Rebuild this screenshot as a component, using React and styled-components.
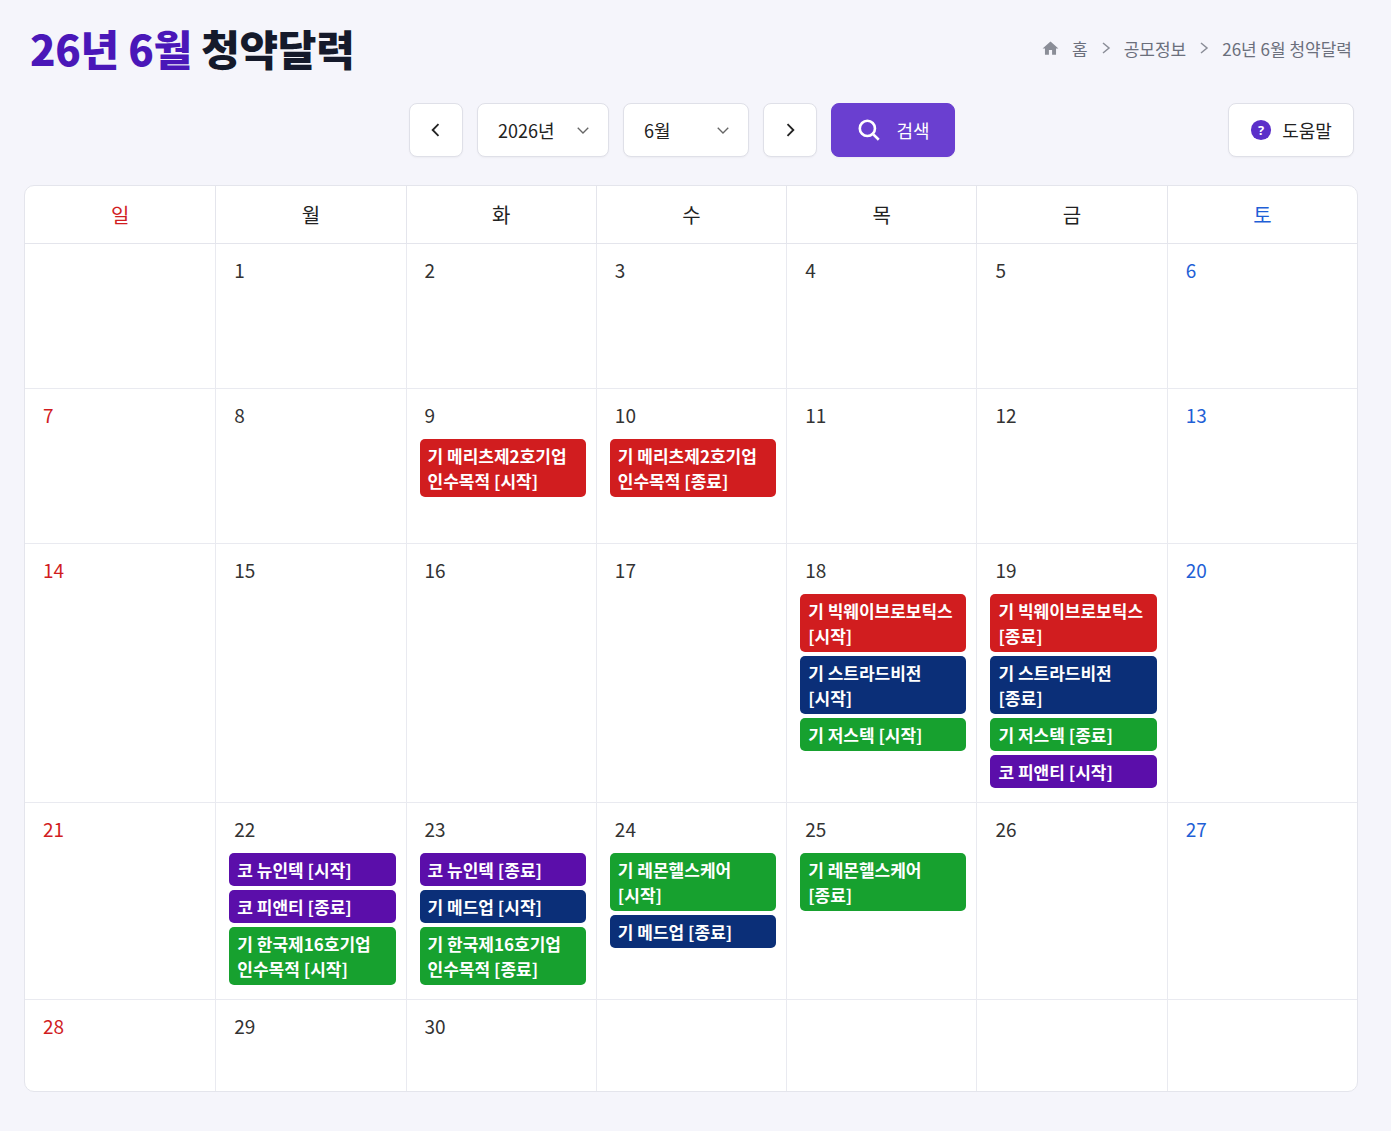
import React from "react";
import styled, { createGlobalStyle } from "styled-components";

const G = createGlobalStyle`
  body{margin:0;background:#f5f5fb;font-family:"Noto Sans CJK KR","Noto Sans",sans-serif;}
`;
const Page = styled.div`padding:20px 33px 30px 24px;`;
const Top = styled.div`display:flex;justify-content:space-between;align-items:center;padding-left:6px;`;
const Title = styled.h1`margin:0;font-size:42px;font-weight:800;color:#151a2b;letter-spacing:-0.3px;line-height:56px;span{color:#4a17b8;}`;
const Crumbs = styled.div`display:flex;align-items:center;gap:12px;color:#6b6f7c;font-size:17px;padding-right:6px;`;
const Bar = styled.div`display:flex;align-items:center;margin-top:27px;height:54px;position:relative;`;
const Center = styled.div`flex:1;display:flex;justify-content:center;gap:14px;padding-right:18px;`;
const Btn = styled.button`height:54px;border:1px solid #dfe0e8;background:#fff;border-radius:8px;display:flex;align-items:center;justify-content:${p=>p.$sp?"space-between":"center"};padding:${p=>p.$sp?"0 16px 0 20px":"0"};width:${p=>p.$w}px;font:inherit;font-size:18px;color:#222;box-shadow:0 1px 2px rgba(0,0,0,.04);`;
const Search = styled(Btn)`background:#6a3fd0;border-color:#6a3fd0;color:#fff;gap:14px;`;
const Help = styled(Btn)`position:absolute;right:4px;top:0;gap:10px;`;
const Card = styled.div`margin-top:28px;background:#fff;border:1px solid #e4e5ec;border-radius:10px;overflow:hidden;`;
const Grid = styled.div`display:grid;grid-template-columns:repeat(7,1fr);`;
const Head = styled.div`height:57px;display:flex;align-items:center;justify-content:center;font-size:20px;color:${p=>p.$c};border-bottom:1px solid #e4e5ec;border-left:${p=>p.$f?"none":"1px solid #e4e5ec"};`;
const Cell = styled.div`min-height:${p=>p.$h}px;padding:14px 10px 14px 13px;border-left:${p=>p.$f?"none":"1px solid #e9eaf0"};border-top:${p=>p.$t?"1px solid #e9eaf0":"none"};display:flex;flex-direction:column;gap:4px;box-sizing:border-box;`;
const Day = styled.div`font-size:19px;color:${p=>p.$c};padding-left:5px;margin-bottom:8px;line-height:24px;`;
const Ev = styled.div`background:${p=>p.$bg};color:#fff;border-radius:5px;padding:4px 8px;font-size:17px;font-weight:600;line-height:25px;word-break:keep-all;`;

const C={r:"#d11d1f",n:"#0b2f78",g:"#17a12f",p:"#5b0eaa"};
const ev={
 9:[["r","기 메리츠제2호기업 인수목적 [시작]"]],
 10:[["r","기 메리츠제2호기업 인수목적 [종료]"]],
 18:[["r","기 빅웨이브로보틱스 [시작]"],["n","기 스트라드비전 [시작]"],["g","기 저스텍 [시작]"]],
 19:[["r","기 빅웨이브로보틱스 [종료]"],["n","기 스트라드비전 [종료]"],["g","기 저스텍 [종료]"],["p","코 피앤티 [시작]"]],
 22:[["p","코 뉴인텍 [시작]"],["p","코 피앤티 [종료]"],["g","기 한국제16호기업 인수목적 [시작]"]],
 23:[["p","코 뉴인텍 [종료]"],["n","기 메드업 [시작]"],["g","기 한국제16호기업 인수목적 [종료]"]],
 24:[["g","기 레몬헬스케어 [시작]"],["n","기 메드업 [종료]"]],
 25:[["g","기 레몬헬스케어 [종료]"]],
};
const heights=[144,155,0,0,92];
const Chev=()=> <svg width="12" height="14" viewBox="0 0 12 14" fill="none" stroke="#8a8d97" strokeWidth="1.5"><path d="M3 2l6 5-6 5"/></svg>;

export default function App(){
  const days=[...Array(35)].map((_,i)=>i>=1&&i<=30?i:null);
  return <><G/><Page>
    <Top><Title><span>26년 6월</span> 청약달력</Title>
      <Crumbs>
        <svg width="19" height="19" viewBox="0 0 24 24" fill="#8a8d97"><path d="M12 3 2 12h3v8h5v-6h4v6h5v-8h3z"/></svg>
        <span>홈</span><Chev/><span>공모정보</span><Chev/><span>26년 6월 청약달력</span>
      </Crumbs></Top>
    <Bar><Center>
      <Btn $w={54}><svg width="20" height="20" viewBox="0 0 24 24" fill="none" stroke="#222" strokeWidth="2.2"><path d="M15 5l-7 7 7 7"/></svg></Btn>
      <Btn $w={132} $sp>2026년<svg width="18" height="18" viewBox="0 0 24 24" fill="none" stroke="#666" strokeWidth="1.8"><path d="M5 9l7 7 7-7"/></svg></Btn>
      <Btn $w={126} $sp>6월<svg width="18" height="18" viewBox="0 0 24 24" fill="none" stroke="#666" strokeWidth="1.8"><path d="M5 9l7 7 7-7"/></svg></Btn>
      <Btn $w={54}><svg width="20" height="20" viewBox="0 0 24 24" fill="none" stroke="#222" strokeWidth="2.2"><path d="M9 5l7 7-7 7"/></svg></Btn>
      <Search $w={124}><svg width="26" height="26" viewBox="0 0 24 24" fill="none" stroke="#fff" strokeWidth="2.4"><circle cx="10.5" cy="10.5" r="7"/><path d="M16 16l5 5"/></svg>검색</Search>
    </Center>
      <Help $w={126}><svg width="22" height="22" viewBox="0 0 24 24"><circle cx="12" cy="12" r="11" fill="#5b2fc9"/><text x="12" y="17" textAnchor="middle" fontSize="14" fontWeight="700" fill="#fff" fontFamily="Noto Sans">?</text></svg>도움말</Help>
    </Bar>
    <Card><Grid>
      {["일","월","화","수","목","금","토"].map((d,i)=><Head key={d} $f={i===0} $c={i===0?"#d11d1f":i===6?"#1f5fd6":"#222"}>{d}</Head>)}
      {days.map((d,i)=>{const c=i%7;return <Cell key={i} $f={c===0} $t={i>=7} $h={heights[Math.floor(i/7)]}>
        {d&&<Day $c={c===0?"#d11d1f":c===6?"#1f5fd6":"#333"}>{d}</Day>}
        {(ev[d]||[]).map(([k,t],j)=><Ev key={j} $bg={C[k]}>{t}</Ev>)}
      </Cell>})}
    </Grid></Card>
  </Page></>;
}
